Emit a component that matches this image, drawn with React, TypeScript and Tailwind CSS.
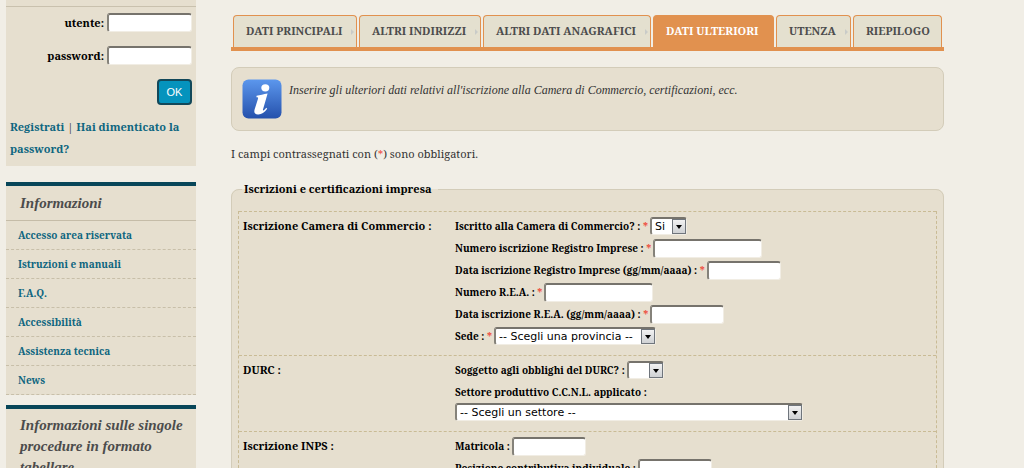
import { useState } from "react";
import type { ReactNode } from "react";
import clsx from "clsx";

const infoLinks = [
  "Accesso area riservata",
  "Istruzioni e manuali",
  "F.A.Q.",
  "Accessibilità",
  "Assistenza tecnica",
  "News",
];

const tabs = [
  { label: "DATI PRINCIPALI", width: "w-[124px]", arrow: true },
  { label: "ALTRI INDIRIZZI", width: "w-[122px]", arrow: true },
  { label: "ALTRI DATI ANAGRAFICI", width: "w-[168px]", arrow: true },
  { label: "DATI ULTERIORI", width: "w-[121px]", arrow: false },
  { label: "UTENZA", width: "w-[75px]", arrow: true },
  { label: "RIEPILOGO", width: "w-[89px]", arrow: false },
];

const boxBorder =
  "border-t-2 border-l-2 border-r border-b border-t-[#76736c] border-l-[#85827a] border-r-[#f1ede4] border-b-[#f1ede4] rounded-[3px] bg-white";

function TextInput({ id, width, type = "text" }: { id: string; width: string; type?: string }) {
  return <input id={id} name={id} type={type} className={clsx(boxBorder, width, "block h-[19px] px-1 font-['DejaVu_Sans'] text-xs outline-none")} />;
}

function SelectBox({ id, width, options }: { id: string; width: string; options: string[] }) {
  return (
    <span className={clsx("relative block", width)}>
      <select id={id} name={id} className={clsx(boxBorder, "block h-[18px] w-full appearance-none pl-[3px] font-['DejaVu_Sans',sans-serif] text-[11px] leading-[15px] outline-none")}>
        {options.map((o) => (
          <option key={o}>{o}</option>
        ))}
      </select>
      <span className="pointer-events-none absolute top-[2px] right-px flex h-[15px] w-[14px] items-center justify-center border border-[#6f757c] bg-linear-to-b from-[#f2f2f2] to-[#cfd1d4]">
        <svg viewBox="0 0 6 4" className="h-1 w-1.5">
          <path d="M0 0h6L3 4z" fill="#000" />
        </svg>
      </span>
    </span>
  );
}

function Field({ id, label, required, children }: { id: string; label: string; required?: boolean; children?: ReactNode }) {
  return (
    <div className="flex h-[22px] items-center gap-0.5">
      <label htmlFor={id} className="text-[10px] font-bold whitespace-nowrap">
        {label} :{required && <span className="text-[#ee4a3a]"> *</span>}
      </label>
      {children}
    </div>
  );
}

function Section({ title, children }: { title: string; children: ReactNode }) {
  return (
    <div className="flex border-t border-dashed border-[#c9bb95] px-1 pt-[3px] pb-2">
      <h3 className="w-[212px] shrink-0 text-[11px] leading-[22px] font-bold">{title} :</h3>
      <div className="min-w-0 flex-1">{children}</div>
    </div>
  );
}

function Login() {
  return (
    <form className="bg-[#e6dfcf] pt-1.5" onSubmit={(e) => e.preventDefault()}>
      <div className="border-t border-[#c9c1ae] pt-1.5 pr-1">
        <div className="mb-3.5 flex items-center justify-end gap-[3px]">
          <label htmlFor="utente" className="text-[11px] leading-[19px] font-bold">utente:</label>
          <TextInput id="utente" width="w-[85px]" />
        </div>
        <div className="mb-3.5 flex items-center justify-end gap-[3px]">
          <label htmlFor="password" className="text-[11px] leading-[19px] font-bold">password:</label>
          <TextInput id="password" type="password" width="w-[85px]" />
        </div>
        <button type="submit" className="ml-auto block h-[26px] w-[35px] rounded border-2 border-[#12485a] bg-[#0593bd] font-['Liberation_Sans',sans-serif] text-[11px] text-white">
          OK
        </button>
      </div>
      <p className="px-1 pt-[11px] pb-1.5 text-[11px] leading-[22px] font-bold text-[#0e6680]">
        <a href="#registrati">Registrati</a> <span className="font-normal text-[#444]">|</span> <a href="#recupero">Hai dimenticato la password?</a>
      </p>
    </form>
  );
}

function Sidebar() {
  return (
    <aside className="w-[190px] shrink-0">
      <Login />
      <nav className="mt-4 border-t-4 border-[#084659] bg-[#e6dfcf]">
        <h2 className="border-b border-[#c5bca8] pl-3.5 font-['Liberation_Serif',serif] text-[15px] leading-[34px] font-bold text-[#4c4c4c] italic">Informazioni</h2>
        <ul>
          {infoLinks.map((link) => (
            <li key={link} className="border-b border-dashed border-[#c8bfa9] pl-3 text-[10px] leading-7 font-bold">
              <a href="#info" className="text-[#0e6680]">{link}</a>
            </li>
          ))}
        </ul>
      </nav>
      <section className="mt-2.5 border-t-4 border-[#084659] bg-[#e6dfcf] pt-1.5 pb-2">
        <h2 className="pl-3.5 font-['Liberation_Serif',serif] text-[15px] leading-[21px] font-bold text-[#4c4c4c] italic">Informazioni sulle singole procedure in formato tabellare</h2>
      </section>
    </aside>
  );
}

function InfoIcon() {
  return (
    <svg viewBox="0 0 40 40" className="size-10 shrink-0" aria-hidden="true">
      <defs>
        <linearGradient id="infoBlue" x1="0" y1="0" x2="0" y2="1">
          <stop offset="0" stopColor="#5c97ed" />
          <stop offset="1" stopColor="#2551ac" />
        </linearGradient>
      </defs>
      <rect x="0.5" y="0.5" width="39" height="39" rx="6" fill="url(#infoBlue)" />
      <ellipse cx="23.3" cy="8.8" rx="4" ry="3.6" fill="#fff" />
      <path d="M14.6 16.8C18 16 21.5 15 25.6 14.4L21 30.4C20.6 32.4 22 31.6 24.2 28.8L25.2 29.8C22.4 33.8 19.2 35.6 16 35.4C12.6 35.2 11.8 33.2 12.6 30.4L16 19.8C16.4 18.2 15.8 18 14.4 18.2Z" fill="#fff" />
    </svg>
  );
}

export default function App() {
  const [active, setActive] = useState("DATI ULTERIORI");

  return (
    <div className="flex min-h-screen gap-[35px] bg-[#f1eee6] pr-20 pl-1.5 font-['Noto_Serif','Liberation_Serif',serif] text-black">
      <Sidebar />
      <main className="min-w-0 flex-1 pt-[15px]">
        <nav className="flex gap-0.5 border-b-4 border-[#e1914f] px-0.5">
          {tabs.map((tab) => (
            <button
              key={tab.label}
              type="button"
              onClick={() => setActive(tab.label)}
              className={clsx(
                tab.width,
                "flex h-8 items-center justify-between rounded-t border border-b-0 border-[#e1914f] pr-0.5 pl-3 text-[11px] font-bold whitespace-nowrap",
                tab.label === active ? "bg-[#e1914f] text-white" : "bg-[#e4e0cf] text-[#4c4c4c]"
              )}
            >
              {tab.label}
              {tab.arrow && (
                <svg viewBox="0 0 3 6" className="h-1.5 w-[3px]">
                  <path d="M0 0l3 3-3 3z" fill="#c9cbc8" />
                </svg>
              )}
            </button>
          ))}
        </nav>

        <div className="mt-4 flex gap-[7px] rounded-lg border border-[#d3ccb9] bg-[#e6dfcf] px-2.5 pt-[11px] pb-[11px]">
          <InfoIcon />
          <p className="font-['Liberation_Serif',serif] text-[12px] leading-[22px] text-[#333] italic">
            Inserire gli ulteriori dati relativi all'iscrizione alla Camera di Commercio, certificazioni, ecc.
          </p>
        </div>

        <p className="mt-3 text-[11px] leading-[22px] text-[#333]">
          I campi contrassegnati con (<span className="text-[#ee4a3a]">*</span>) sono obbligatori.
        </p>

        <fieldset className="mt-[13px] rounded-lg border border-[#d3ccb9] bg-[#e6dfcf] px-1.5 pb-2">
          <legend className="ml-1 pr-1.5 pl-0.5 text-[11px] leading-[22px] font-bold">Iscrizioni e certificazioni impresa</legend>
          <div className="mt-[11px] border-x border-b border-dashed border-[#c9bb95]">
            <Section title="Iscrizione Camera di Commercio">
              <Field id="cciaa" label="Iscritto alla Camera di Commercio?" required>
                <SelectBox id="cciaa" width="w-[37px]" options={["Si", "No"]} />
              </Field>
              <Field id="numRegistro" label="Numero iscrizione Registro Imprese" required>
                <TextInput id="numRegistro" width="w-[109px]" />
              </Field>
              <Field id="dataRegistro" label="Data iscrizione Registro Imprese (gg/mm/aaaa)" required>
                <TextInput id="dataRegistro" width="w-[74px]" />
              </Field>
              <Field id="numRea" label="Numero R.E.A." required>
                <TextInput id="numRea" width="w-[109px]" />
              </Field>
              <Field id="dataRea" label="Data iscrizione R.E.A. (gg/mm/aaaa)" required>
                <TextInput id="dataRea" width="w-[74px]" />
              </Field>
              <Field id="sede" label="Sede" required>
                <SelectBox id="sede" width="w-[162px]" options={["-- Scegli una provincia --"]} />
              </Field>
            </Section>
            <Section title="DURC">
              <Field id="durc" label="Soggetto agli obblighi del DURC?">
                <SelectBox id="durc" width="w-[37px]" options={["", "Si", "No"]} />
              </Field>
              <Field id="ccnl" label="Settore produttivo C.C.N.L. applicato" />
              <div className="pb-0.5">
                <SelectBox id="ccnl" width="w-[348px]" options={["-- Scegli un settore --"]} />
              </div>
            </Section>
            <Section title="Iscrizione INPS">
              <Field id="matricolaInps" label="Matricola">
                <TextInput id="matricolaInps" width="w-[74px]" />
              </Field>
              <Field id="posizione" label="Posizione contributiva individuale">
                <TextInput id="posizione" width="w-[74px]" />
              </Field>
            </Section>
          </div>
        </fieldset>
      </main>
    </div>
  );
}
